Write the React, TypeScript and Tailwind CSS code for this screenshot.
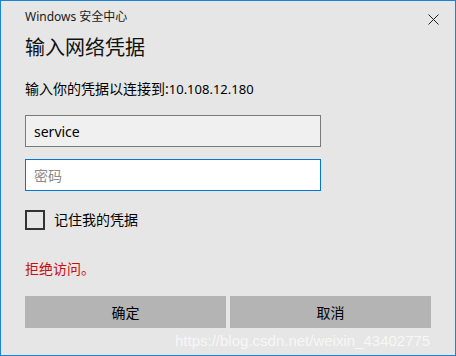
const font = { fontFamily: '"Noto Sans", "Noto Sans CJK SC", sans-serif' };

export default function App() {
  return (
    <div
      className="relative flex h-[356px] w-[456px] flex-col border border-[#1883d7] bg-[#e6e6e6] px-6 text-[#000]"
      style={font}
    >
      <div className="flex items-center justify-between pt-[8px]">
        <span className="text-[12px] leading-[16px] text-[#1a1a1a]">Windows 安全中心</span>
        <svg width="11" height="11" viewBox="0 0 11 11" className="mr-[-8px] mt-[4px]">
          <path d="M0.5 0.5L10.5 10.5M10.5 0.5L0.5 10.5" stroke="#222" strokeWidth="1" />
        </svg>
      </div>

      <h1 className="mt-[10px] text-[20px] leading-[26px] text-[#111]">输入网络凭据</h1>

      <p className="mt-[19px] text-[14px] leading-[18px]">
        输入你的凭据以连接到:<span className="text-[13px]">10.108.12.180</span>
      </p>

      <div className="mt-[17px] flex h-[32px] w-[296px] items-center border border-[#7a7a7a] bg-[#f0f0f0] px-2 text-[14px]">
        service
      </div>
      <div className="mt-[12px] flex h-[32px] w-[296px] items-center border border-[#0078d7] bg-white px-2 text-[14px] text-[#8a8a8a]">
        密码
      </div>

      <label className="mt-[18px] flex items-center gap-[9px] text-[14px]">
        <span className="h-[20px] w-[20px] border-2 border-[#333]" />
        记住我的凭据
      </label>

      <p className="mt-[30px] text-[14px] leading-[18px] text-[#c50f0f]">拒绝访问。</p>

      <div className="mt-[18px] flex gap-[4px]">
        <button className="h-[32px] w-[201px] bg-[#b4b4b4] text-[14px]">确定</button>
        <button className="h-[32px] w-[201px] bg-[#b4b4b4] text-[14px]">取消</button>
      </div>

      <span className="absolute left-[174px] top-[329px] text-[15px] text-white/70" style={{ fontFamily: '"Liberation Sans", sans-serif' }}>
        https://blog.csdn.net/weixin_43402775
      </span>
    </div>
  );
}
